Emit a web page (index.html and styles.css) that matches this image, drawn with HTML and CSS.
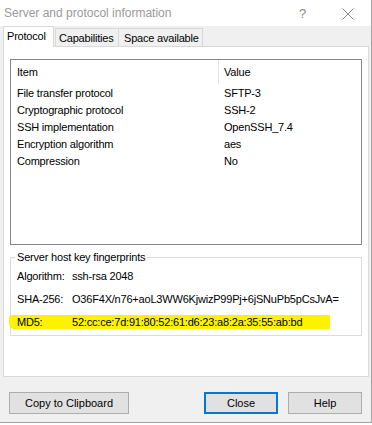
FILE: index.html
```html
<!DOCTYPE html>
<html>
<head>
<meta charset="utf-8">
<link rel="stylesheet" href="styles.css">
</head>
<body>
<div class="window">
  <div class="titlebar">
    <span class="title">Server and protocol information</span>
    <span class="help-glyph">?</span>
    <svg class="close-icon" width="12" height="12" viewBox="0 0 12 12"><path d="M0.5 0.5 L11.5 11.5 M11.5 0.5 L0.5 11.5" stroke="#8a8a8a" stroke-width="1" fill="none"/></svg>
  </div>
  <div class="client">
    <div class="tabs">
      <div class="tab active">Protocol</div>
      <div class="tab cap">Capabilities</div>
      <div class="tab space">Space available</div>
    </div>
    <div class="panel">
      <div class="listview">
        <div class="lv-head">
          <div class="c1">Item</div>
          <div class="c2 divider">Value</div>
        </div>
        <div class="lv-row"><div class="c1">File transfer protocol</div><div class="c2">SFTP-3</div></div>
        <div class="lv-row"><div class="c1">Cryptographic protocol</div><div class="c2">SSH-2</div></div>
        <div class="lv-row"><div class="c1">SSH implementation</div><div class="c2">OpenSSH_7.4</div></div>
        <div class="lv-row"><div class="c1">Encryption algorithm</div><div class="c2">aes</div></div>
        <div class="lv-row"><div class="c1">Compression</div><div class="c2">No</div></div>
      </div>
      <fieldset class="group">
        <legend>Server host key fingerprints</legend>
        <div class="fp-row"><span class="lbl">Algorithm:</span><span class="val">ssh-rsa 2048</span></div>
        <div class="fp-row"><span class="lbl">SHA-256:</span><span class="val">O36F4X/n76+aoL3WW6KjwizP99Pj+6jSNuPb5pCsJvA=</span></div>
        <div class="fp-row hl"><span class="lbl">MD5:</span><span class="val">52:cc:ce:7d:91:80:52:61:d6:23:a8:2a:35:55:ab:bd</span></div>
      </fieldset>
    </div>
    <div class="footer">
      <button class="btn copy">Copy to Clipboard</button>
      <div class="spacer"></div>
      <button class="btn small default">Close</button>
      <button class="btn small">Help</button>
    </div>
  </div>
</div>
</body>
</html>
```

FILE: styles.css
```css
* { box-sizing: border-box; }
html, body { margin: 0; padding: 0; background: #ffffff; }
body {
  font-family: "Liberation Sans", Arial, sans-serif;
  font-size: 11px;
  letter-spacing: -0.2px;
  color: #000;
}
.window {
  width: 372px;
  height: 423px;
  border-right: 1px solid #a3a3a3;
  border-bottom: 1px solid #a3a3a3;
  display: flex;
  flex-direction: column;
  background: #f0f0f0;
}
.titlebar {
  height: 26px;
  background: #ffffff;
  display: flex;
  align-items: center;
  padding-left: 4px;
  flex: none;
}
.title {
  font-size: 12px;
  letter-spacing: 0;
  color: #9a9a9a;
  flex: 1;
}
.help-glyph {
  font-size: 13px;
  color: #8a8a8a;
  margin-right: 36px;
}
.close-icon {
  margin-right: 17px;
  margin-top: 2px;
}
.client {
  flex: 1;
  display: flex;
  flex-direction: column;
  padding: 0 2px 0 3px;
}
.tabs {
  height: 20px;
  display: flex;
  align-items: flex-end;
  flex: none;
}
.tab {
  height: 18px;
  border: 1px solid #d9d9d9;
  border-bottom: none;
  background: #f0f0f0;
  display: flex;
  align-items: center;
  white-space: nowrap;
  padding: 1px 0 0 3px;
}
.tab.active {
  height: 21px;
  margin-bottom: -1px;
  background: #ffffff;
  position: relative;
  z-index: 1;
  width: 51px;
  padding: 0 0 2px 3px;
}
.tab.cap { margin-left: 1px; width: 64px; }
.tab.space { border-left: none; width: 84px; padding-left: 5px; }
.panel {
  height: 331px;
  background: #ffffff;
  border: 1px solid #d9d9d9;
  padding: 12px 0 0 6px;
  flex: none;
}
.listview {
  width: 352px;
  height: 186px;
  border: 1px solid #828790;
}
.lv-head, .lv-row {
  display: flex;
  align-items: center;
}
.lv-head { height: 24px; }
.lv-row { height: 17px; }
.c1 { width: 207px; padding-left: 6px; }
.c2 { padding-left: 6px; }
.divider {
  border-left: 1px solid #e5e5e5;
  height: 24px;
  display: flex;
  align-items: center;
  padding-left: 5px;
}
.group {
  width: 352px;
  margin: 6px 0 0 0;
  border: 1px solid #dcdcdc;
  padding: 0 0 2px 4px;
  min-width: 0;
}
.group legend {
  padding: 0 2px;
  line-height: 13px;
  font-size: 11px;
}
.fp-row {
  height: 23px;
  display: flex;
  align-items: center;
  padding-left: 2px;
  position: relative;
}
.lbl { width: 55px; flex: none; position: relative; z-index: 1; }
.val { position: relative; z-index: 1; }
.hl::before {
  content: "";
  position: absolute;
  left: -6px;
  top: 5px;
  width: 321px;
  height: 14px;
  background: #fff200;
  border-radius: 3px 1px 1px 5px;
}
.footer {
  flex: 1;
  display: flex;
  align-items: flex-start;
  padding: 15px 7px 0 6px;
}
.spacer { flex: 1; }
.btn {
  height: 22px;
  background: #e1e1e1;
  border: 1px solid #adadad;
  font-family: "Liberation Sans", Arial, sans-serif;
  font-size: 11px;
  color: #000;
  padding: 0;
  margin: 0;
}
.btn.copy { width: 120px; }
.btn.small { width: 74px; margin-left: 10px; }
.btn.default { border: 2px solid #0078d7; margin-left: 0; }
```
